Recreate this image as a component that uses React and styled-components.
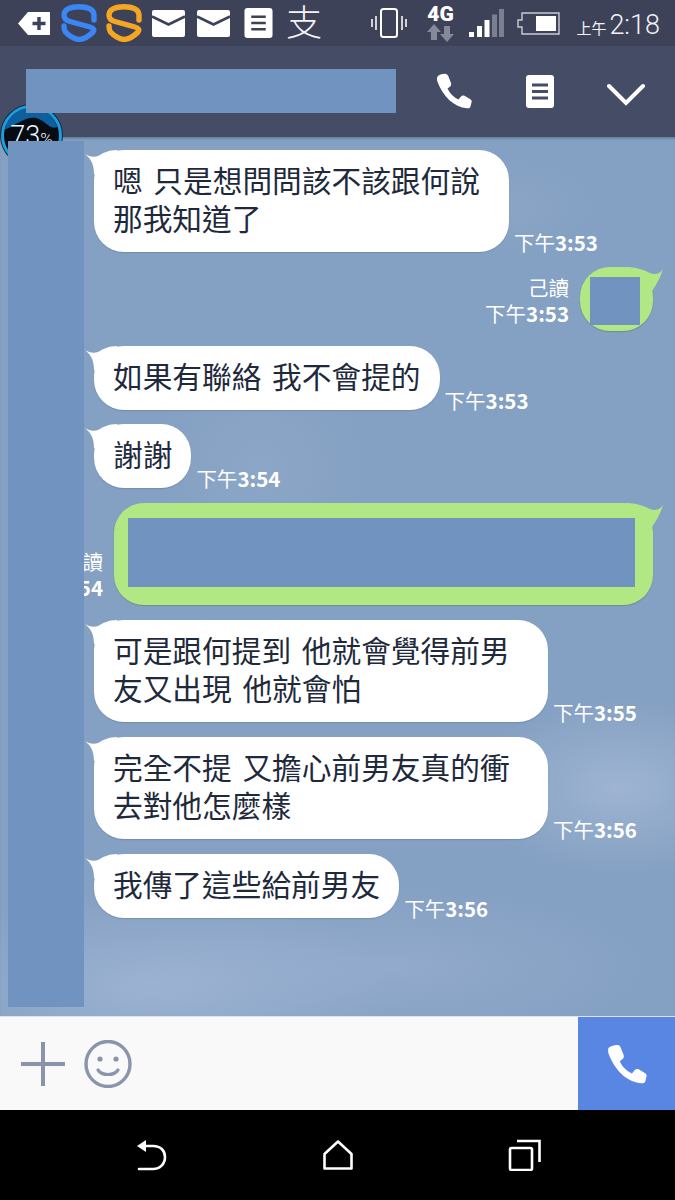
import React from 'react';
import styled, { createGlobalStyle } from 'styled-components';

const REDACT = '#7093bf';
const CJK = '"Noto Sans CJK TC", "Noto Sans", sans-serif';

const GlobalStyle = createGlobalStyle`
  html, body {
    margin: 0;
    padding: 0;
    background: #000;
  }
  body {
    width: 675px;
    height: 1200px;
    overflow: hidden;
    font-family: ${CJK};
  }
`;

const Screen = styled.div`
  position: relative;
  width: 675px;
  height: 1200px;
  display: flex;
  flex-direction: column;
`;

/* status bar */
const StatusBar = styled.div`
  height: 46px;
  flex: none;
  display: flex;
  align-items: center;
  background: #3d4259;
  color: #fff;
  padding: 0 15px 0 18px;
`;

const StatusIcon = styled.svg`
  flex: none;
  display: block;
  margin-left: ${p => p.$gap || 0}px;
`;

const AlipayGlyph = styled.span`
  margin-left: 13px;
  width: 37px;
  font-size: 36px;
  line-height: 40px;
  padding-bottom: 6px;
  font-weight: 300;
  color: #f4f4f6;
`;

const NetworkBadge = styled.div`
  margin-left: 20px;
  width: 27px;
  display: flex;
  flex-direction: column;
  align-items: center;
`;

const NetworkLabel = styled.span`
  font-family: "Roboto", sans-serif;
  font-weight: 900;
  font-size: 21px;
  line-height: 18px;
  margin-bottom: 1px;
`;

const Clock = styled.div`
  margin-left: auto;
  margin-top: 4px;
  display: flex;
  align-items: baseline;
  color: #f2f3f6;
  white-space: nowrap;
`;

const ClockHalf = styled.span`
  font-size: 15px;
  margin-right: 3px;
`;

const ClockTime = styled.span`
  font-family: "Roboto", sans-serif;
  font-weight: 300;
  font-size: 27px;
`;

const StatusRight = styled.div`
  margin-left: 48px;
  flex: 1;
  display: flex;
  align-items: center;
`;

/* header */
const Header = styled.header`
  height: 91px;
  flex: none;
  display: flex;
  align-items: center;
  box-sizing: border-box;
  background: #454d66;
  padding: 0 30px 1px 26px;
`;

const Redaction = styled.div`
  position: relative;
  background: ${REDACT};
  width: ${p => p.$w}px;
  height: ${p => p.$h}px;
`;

const TitleRedaction = styled(Redaction)`
  z-index: 6;
`;

const HeaderIcons = styled.div`
  margin-left: 40px;
  flex: 1;
  display: flex;
  align-items: center;
  justify-content: space-between;
`;

const Glyph = styled.svg`
  display: block;
  flex: none;
`;

const Chevron = styled(Glyph)`
  margin-top: 6px;
`;

const Smiley = styled(Glyph)`
  margin-left: 19px;
`;

/* floating widget */
const Widget = styled.div`
  position: absolute;
  left: 1px;
  top: 105px;
  width: 61px;
  height: 61px;
  box-sizing: border-box;
  border-radius: 50%;
  border: 3px solid #1b9fe0;
  box-shadow: 0 0 0 1px #1c2436;
  background: #070b12;
  overflow: hidden;
  z-index: 5;
  color: #eef6ff;
  text-align: center;
`;

const WidgetWave = styled.svg`
  position: absolute;
  left: 0;
  top: 0;
`;

const WidgetValue = styled.div`
  position: relative;
  font-family: "Roboto", sans-serif;
  font-weight: 300;
  font-size: 27px;
  line-height: 30px;
  padding-top: 13px;
  white-space: nowrap;
`;

const WidgetUnit = styled.span`
  font-size: 17px;
`;

/* chat */
const Chat = styled.main`
  position: relative;
  flex: 1;
  min-height: 0;
  display: flex;
  flex-direction: column;
  gap: 14.8px;
  padding-top: 13px;
  box-sizing: border-box;
  background:
    radial-gradient(ellipse 110px 110px at 260px 330px, rgba(175, 195, 220, 0.18), transparent),
    radial-gradient(ellipse 90px 50px at 510px 70px, rgba(175, 195, 220, 0.14), transparent),
    radial-gradient(ellipse 150px 90px at 620px 650px, rgba(185, 200, 226, 0.5), transparent),
    radial-gradient(ellipse 240px 100px at 150px 850px, rgba(180, 196, 226, 0.5), transparent),
    radial-gradient(ellipse 260px 80px at 390px 830px, rgba(170, 188, 220, 0.38), transparent),
    #84a0c2;
  box-shadow: inset 0 3px 3px -2px rgba(40, 48, 70, 0.45);
`;

const ColumnRedaction = styled(Redaction)`
  position: absolute;
  left: 8px;
  top: 4px;
  z-index: 6;
`;

const Row = styled.div`
  display: flex;
  align-items: flex-end;
  justify-content: ${p => (p.$out ? 'flex-end' : 'flex-start')};
  gap: ${p => (p.$out ? 11 : 5)}px;
  padding: ${p => (p.$out ? '0 22px 0 0' : '0 0 0 94px')};
`;

const Bubble = styled.div`
  position: relative;
  flex: none;
  box-sizing: border-box;
  width: ${p => (p.$width ? `${p.$width}px` : 'auto')};
  padding: 11px 19px 15px;
  border-radius: 30px;
  background: #fff;
  color: #1e2a3c;
  font-size: 29.7px;
  word-spacing: 4px;
  line-height: 38px;
  box-shadow: 0 1px 1px rgba(50, 65, 95, 0.2);
  white-space: nowrap;
`;

const OutBubble = styled(Bubble)`
  padding: ${p => p.$pad};
  background: #b2e884;
  box-shadow: 0 1px 1px rgba(70, 110, 70, 0.35);
`;

const BubbleText = styled.span`
  position: relative;
`;

const Tail = styled.svg`
  position: absolute;
  top: 0;
  ${p => (p.$out ? 'right: -11px;' : 'left: -11px;')}
`;

const Meta = styled.div`
  flex: none;
  color: #fff;
  font-size: 20.5px;
  line-height: 26px;
  text-align: right;
  white-space: nowrap;
  margin-bottom: ${p => (p.$out ? 5 : -3)}px;
`;

const MetaTime = styled.b`
  font-weight: 700;
`;

/* composer */
const Composer = styled.div`
  height: 94px;
  flex: none;
  display: flex;
  align-items: center;
  box-sizing: border-box;
  padding-left: 21px;
  background: #f9f9f9;
  border-top: 1px solid #dfe5ee;
`;

const SendButton = styled.div`
  margin-left: auto;
  width: 97px;
  align-self: stretch;
  display: flex;
  align-items: center;
  justify-content: center;
  background: #5986e3;
`;

/* nav bar */
const NavBar = styled.nav`
  height: 90px;
  flex: none;
  box-sizing: border-box;
  padding: 0 57px;
  display: grid;
  grid-template-columns: repeat(3, 187px);
  align-items: center;
  justify-items: center;
  background: #000;
`;

const HANDSET =
  'M2 3 C4 1.5 8 0.5 10 1 C11.5 1.5 12.5 3 13 5 L15 10 C15.5 12 15 13 13.5 14 L11.5 15.5 C14 21 18 24.5 22.5 26.5 L25 23.5 C26 22.5 27 22 28.5 22.8 L34 26 C35.5 27 36 28 35.5 29.5 L34.5 33.5 C34 35 33 35.5 31 35.3 C18 34 7 24 1.2 8 C0.8 6 0.8 4 2 3 Z';

const Handset = ({ size, color }) => (
  <Glyph width={size} height={size} viewBox="0 0 36 36">
    <path d={HANDSET} fill={color} />
  </Glyph>
);

const Shield = ({ color, gap }) => (
  <StatusIcon $gap={gap} width="36" height="38" viewBox="0 0 36 38" fill="none">
    <path
      d="M33 16 V11 C33 5 26 2.8 18 2.8 C10 2.8 3 5 3 11 C3 14.5 5 16.5 9 17.5 L29 23 C33 24 33.5 26 32 28 C28 32 22 35.4 18 35.4 C14 35.4 8 32 4.5 28 C3.5 26.5 3 25 3 22"
      stroke={color}
      strokeWidth="5.4"
      strokeLinecap="round"
    />
  </StatusIcon>
);

const Mail = ({ gap }) => (
  <StatusIcon $gap={gap} width="33" height="27" viewBox="0 0 33 27">
    <rect width="33" height="27" rx="2" fill="#fff" />
    <path d="M0 6.5 L16.5 14.5 L33 6.5" fill="none" stroke="#3d4259" strokeWidth="2.6" />
  </StatusIcon>
);

const NoteLines = ({ w, h, color, gap }) => (
  <StatusIcon $gap={gap} width={w} height={h} viewBox="0 0 29 31">
    <rect width="29" height="31" rx="3" fill="#fff" />
    <path d="M7 9 H22 M7 15.5 H22 M7 22 H22" stroke={color} strokeWidth="2.6" />
  </StatusIcon>
);

const ChatRow = ({ time, width, children }) => (
  <Row>
    <Bubble $width={width}>
      <Tail width="40" height="24" viewBox="0 0 40 24">
        <path d="M0 3 C5 6 10 8 15 6 C20 3 26 0 34 0 L34 24 L11 24 C11 13 7 7 0 3 Z" fill="#fff" />
      </Tail>
      <BubbleText>{children}</BubbleText>
    </Bubble>
    <Meta>
      下午<MetaTime>{time}</MetaTime>
    </Meta>
  </Row>
);

const OutRow = ({ time, pad, w, h }) => (
  <Row $out>
    <Meta $out>
      己讀
      <br />
      下午<MetaTime>{time}</MetaTime>
    </Meta>
    <OutBubble $pad={pad}>
      <Tail $out width="40" height="24" viewBox="0 0 40 24">
        <path d="M39 2 C36 7 31 8 26 6 C20 3 12 0 2 0 L2 24 L28 24 C33 17 37 9 39 2 Z" fill="#b2e884" />
      </Tail>
      <Redaction $w={w} $h={h} />
    </OutBubble>
  </Row>
);

export default function App() {
  return (
    <Screen>
      <GlobalStyle />
      <StatusBar>
        <StatusIcon width="32" height="23" viewBox="0 0 32 23">
          <path d="M0 11.5 L10 0 H32 V23 H10 Z" fill="#fff" />
          <path d="M21 5 V18 M14.5 11.5 H27.5" stroke="#3d4259" strokeWidth="3.4" />
        </StatusIcon>
        <Shield color="#3a86f5" gap={11} />
        <Shield color="#f5a623" gap={9} />
        <Mail gap={10} />
        <Mail gap={12} />
        <NoteLines w={29} h={30} color="#3d4259" gap={14} />
        <AlipayGlyph>支</AlipayGlyph>
        <StatusRight>
          <StatusIcon width="36" height="30" viewBox="0 0 36 30" fill="none" stroke="#fff">
            <rect x="10" y="1" width="16" height="28" rx="2.5" strokeWidth="2" />
            <path d="M5 8 V22 M1 11 V19 M31 8 V22 M35 11 V19" strokeWidth="1.8" opacity="0.85" />
          </StatusIcon>
          <NetworkBadge>
            <NetworkLabel>4G</NetworkLabel>
            <StatusIcon width="27" height="18" viewBox="0 0 27 18" fill="#858a99">
              <path d="M7 0 L14 8 H10 V16 H4 V8 H0 Z" />
              <path d="M20 18 L13 10 H17 V2 H23 V10 H27 Z" />
            </StatusIcon>
          </NetworkBadge>
          <StatusIcon $gap={15} width="35" height="28" viewBox="0 0 35 28">
            <path d="M0 23 H5 V28 H0 Z M8 17 H13 V28 H8 Z M15.5 11 H20.5 V28 H15.5 Z" fill="#fff" />
            <path d="M23 5.5 H28 V28 H23 Z M30 0 H35 V28 H30 Z" fill="#7b8090" />
          </StatusIcon>
          <StatusIcon $gap={13} width="43" height="23" viewBox="0 0 43 23" fill="none">
            <path d="M5 1 H42 V22 H5 V15 H1 V8 H5 Z" stroke="#c9ccd4" strokeWidth="1.4" />
            <rect x="19" y="4" width="20" height="15" fill="#fff" />
          </StatusIcon>
          <Clock>
            <ClockHalf>上午</ClockHalf>
            <ClockTime>2:18</ClockTime>
          </Clock>
        </StatusRight>
      </StatusBar>

      <Header>
        <TitleRedaction $w={370} $h={44} />
        <HeaderIcons>
          <Handset size={36} color="#fff" />
          <Glyph width="28" height="33" viewBox="0 0 28 33">
            <rect width="28" height="33" rx="3" fill="#fff" />
            <path d="M6 10 H22 M6 16.5 H22 M6 23 H22" stroke="#454d66" strokeWidth="2.8" />
          </Glyph>
          <Chevron width="38" height="23" viewBox="0 0 38 23">
            <path d="M2 3 L19 20 L36 3" fill="none" stroke="#fff" strokeWidth="4" strokeLinecap="round" />
          </Chevron>
        </HeaderIcons>
      </Header>

      <Widget>
        <WidgetWave width="55" height="55" viewBox="0 0 55 55">
          <path d="M0 0 H55 V18 C46 24 42 12 32 10 C22 8 14 16 0 22 Z" fill="#0d5f9e" />
        </WidgetWave>
        <WidgetValue>
          73<WidgetUnit>%</WidgetUnit>
        </WidgetValue>
      </Widget>

      <Chat>
        <ColumnRedaction $w={76} $h={866} />
        <ChatRow time="3:53" width={415}>
          嗯 只是想問問該不該跟何說
          <br />
          那我知道了
        </ChatRow>
        <OutRow time="3:53" pad="10px 13px 6px 10px" w={50} h={48} />
        <ChatRow time="3:53">如果有聯絡 我不會提的</ChatRow>
        <ChatRow time="3:54">謝謝</ChatRow>
        <OutRow time="3:54" pad="15px 18px 18px 14px" w={507} h={69} />
        <ChatRow time="3:55" width={454}>
          可是跟何提到 他就會覺得前男
          <br />
          友又出現 他就會怕
        </ChatRow>
        <ChatRow time="3:56" width={454}>
          完全不提 又擔心前男友真的衝
          <br />
          去對他怎麼樣
        </ChatRow>
        <ChatRow time="3:56">我傳了這些給前男友</ChatRow>
      </Chat>

      <Composer>
        <Glyph width="44" height="46" viewBox="0 0 44 46">
          <path d="M22 1 V45 M0 23 H44" stroke="#8a94ad" strokeWidth="4" />
        </Glyph>
        <Smiley width="48" height="48" viewBox="0 0 48 48" fill="none">
          <ellipse cx="24" cy="24" rx="22" ry="22.5" stroke="#8a94ad" strokeWidth="3.4" />
          <circle cx="16" cy="19" r="2.6" fill="#8a94ad" />
          <circle cx="32" cy="19" r="2.6" fill="#8a94ad" />
          <path d="M14 30 C18 36 30 36 34 30" stroke="#8a94ad" strokeWidth="3.2" strokeLinecap="round" />
        </Smiley>
        <SendButton>
          <Handset size={40} color="#fff" />
        </SendButton>
      </Composer>

      <NavBar>
        <Glyph width="32" height="32" viewBox="0 0 32 32" fill="none">
          <path d="M2 7 L11 1 V13 Z" fill="#fff" />
          <path d="M10 7 H18 C26 7 30 12 30 18 C30 25 25 30 18 30 H4" stroke="#fff" strokeWidth="2.6" strokeLinecap="round" />
        </Glyph>
        <Glyph width="30" height="30" viewBox="0 0 30 30" fill="none">
          <path d="M15 1.5 L28.5 14 V28.5 H1.5 V14 Z" stroke="#fff" strokeWidth="2.6" strokeLinejoin="round" />
        </Glyph>
        <Glyph width="34" height="32" viewBox="0 0 34 32" fill="none">
          <rect x="2" y="9" width="22" height="22" rx="1.5" stroke="#fff" strokeWidth="2.6" />
          <path d="M9 2 H31.5 V23" stroke="#fff" strokeWidth="2.6" />
        </Glyph>
      </NavBar>
    </Screen>
  );
}
